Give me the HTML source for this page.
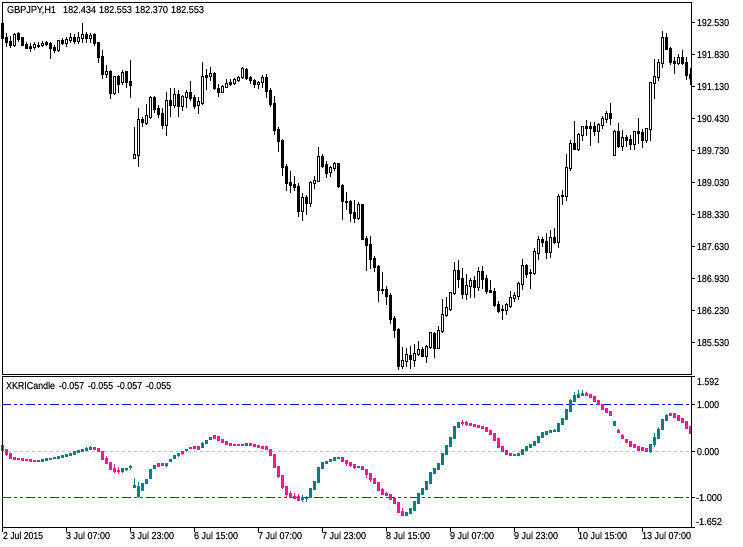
<!DOCTYPE html>
<html><head><meta charset="utf-8"><style>
html,body{margin:0;padding:0;background:#fff;width:743px;height:547px;overflow:hidden}
svg{display:block;position:absolute;left:0;top:0}
text{font-family:"Liberation Sans",sans-serif;font-size:10px;fill:#000;stroke:#000;stroke-width:.22px}
</style></head><body>
<svg id="c" width="743" height="547" viewBox="0 0 743 547" shape-rendering="crispEdges">
<g id="levels">
<line x1="2" y1="404.5" x2="691" y2="404.5" stroke="#0000ff" stroke-dasharray="9 3 3 3 3 3"/>
<line x1="2" y1="451.5" x2="691" y2="451.5" stroke="#c0c0c0" stroke-dasharray="3 3"/>
<line x1="2" y1="497.5" x2="691" y2="497.5" stroke="#800080" stroke-dasharray="9 3 3 3 3 3"/>
</g>
<g id="m"></g><g id="s"></g>
<g fill="#000">
<rect x="2" y="2" width="690" height="1"/><rect x="2" y="2" width="1" height="373"/><rect x="2" y="376" width="1" height="152"/>
<rect x="2" y="374" width="690" height="1"/><rect x="2" y="376" width="690" height="1"/><rect x="2" y="527" width="690" height="1"/>
<rect x="691" y="2" width="1" height="373"/><rect x="691" y="376" width="1" height="152"/>
<path d="M692 22h3v1h-3zM692 54h3v1h-3zM692 86h3v1h-3zM692 118h3v1h-3zM692 150h3v1h-3zM692 182h3v1h-3zM692 214h3v1h-3zM692 246h3v1h-3zM692 278h3v1h-3zM692 310h3v1h-3zM692 342h3v1h-3zM692 376h3v1h-3zM692 404h3v1h-3zM692 451h3v1h-3zM692 497h3v1h-3zM692 527h3v1h-3zM2 528h1v4h-1zM66 528h1v4h-1zM130 528h1v4h-1zM194 528h1v4h-1zM258 528h1v4h-1zM322 528h1v4h-1zM386 528h1v4h-1zM450 528h1v4h-1zM514 528h1v4h-1zM578 528h1v4h-1zM642 528h1v4h-1z"/>
</g>
<g style="text-rendering:geometricPrecision" shape-rendering="auto">
<text x="7" y="13" textLength="49" lengthAdjust="spacingAndGlyphs">GBPJPY,H1</text>
<text x="63" y="13" textLength="33" lengthAdjust="spacingAndGlyphs">182.434</text>
<text x="99" y="13" textLength="33" lengthAdjust="spacingAndGlyphs">182.553</text>
<text x="135" y="13" textLength="33" lengthAdjust="spacingAndGlyphs">182.370</text>
<text x="171" y="13" textLength="33" lengthAdjust="spacingAndGlyphs">182.553</text>
<text x="6" y="389" textLength="49" lengthAdjust="spacingAndGlyphs">XKRICandle</text>
<text x="59" y="389" textLength="25" lengthAdjust="spacingAndGlyphs">-0.057</text>
<text x="88" y="389" textLength="25" lengthAdjust="spacingAndGlyphs">-0.055</text>
<text x="117" y="389" textLength="25" lengthAdjust="spacingAndGlyphs">-0.057</text>
<text x="146" y="389" textLength="25" lengthAdjust="spacingAndGlyphs">-0.055</text>
<text x="697" y="26" textLength="32" lengthAdjust="spacingAndGlyphs">192.530</text>
<text x="697" y="58" textLength="32" lengthAdjust="spacingAndGlyphs">191.830</text>
<text x="697" y="90" textLength="32" lengthAdjust="spacingAndGlyphs">191.130</text>
<text x="697" y="122" textLength="32" lengthAdjust="spacingAndGlyphs">190.430</text>
<text x="697" y="154" textLength="32" lengthAdjust="spacingAndGlyphs">189.730</text>
<text x="697" y="186" textLength="32" lengthAdjust="spacingAndGlyphs">189.030</text>
<text x="697" y="218" textLength="32" lengthAdjust="spacingAndGlyphs">188.330</text>
<text x="697" y="250" textLength="32" lengthAdjust="spacingAndGlyphs">187.630</text>
<text x="697" y="282" textLength="32" lengthAdjust="spacingAndGlyphs">186.930</text>
<text x="697" y="314" textLength="32" lengthAdjust="spacingAndGlyphs">186.230</text>
<text x="697" y="346" textLength="32" lengthAdjust="spacingAndGlyphs">185.530</text>
<text x="697" y="385" textLength="22" lengthAdjust="spacingAndGlyphs">1.592</text>
<text x="697" y="408" textLength="22" lengthAdjust="spacingAndGlyphs">1.000</text>
<text x="697" y="455" textLength="22" lengthAdjust="spacingAndGlyphs">0.000</text>
<text x="696" y="501" textLength="26" lengthAdjust="spacingAndGlyphs">-1.000</text>
<text x="696" y="525" textLength="26" lengthAdjust="spacingAndGlyphs">-1.652</text>
<text x="3" y="539" textLength="40" lengthAdjust="spacingAndGlyphs">2 Jul 2015</text>
<text x="66" y="539" textLength="44" lengthAdjust="spacingAndGlyphs">3 Jul 07:00</text>
<text x="130" y="539" textLength="44" lengthAdjust="spacingAndGlyphs">3 Jul 23:00</text>
<text x="194" y="539" textLength="44" lengthAdjust="spacingAndGlyphs">6 Jul 15:00</text>
<text x="258" y="539" textLength="44" lengthAdjust="spacingAndGlyphs">7 Jul 07:00</text>
<text x="322" y="539" textLength="44" lengthAdjust="spacingAndGlyphs">7 Jul 23:00</text>
<text x="386" y="539" textLength="44" lengthAdjust="spacingAndGlyphs">8 Jul 15:00</text>
<text x="450" y="539" textLength="44" lengthAdjust="spacingAndGlyphs">9 Jul 07:00</text>
<text x="514" y="539" textLength="44" lengthAdjust="spacingAndGlyphs">9 Jul 23:00</text>
<text x="578" y="539" textLength="49" lengthAdjust="spacingAndGlyphs">10 Jul 15:00</text>
<text x="642" y="539" textLength="49" lengthAdjust="spacingAndGlyphs">13 Jul 07:00</text>
</g>
</svg>
<script>
var M=[[23,23,38,38,0],[33,37,42,46,0],[36,41,45,47,0],[33,34,45,46,1],[32,33,39,41,0],[37,37,45,45,0],[42,44,48,48,0],[43,46,48,51,0],[42,44,47,49,1],[42,45,46,47,0],[41,43,45,46,1],[41,42,44,45,0],[42,43,48,58,0],[45,47,50,52,0],[40,40,50,51,1],[38,40,43,44,0],[37,39,43,46,1],[33,37,40,42,1],[34,37,41,43,0],[32,37,41,43,1],[23,34,38,42,1],[32,34,38,42,0],[33,35,38,42,1],[33,34,43,45,0],[42,42,57,62,0],[50,56,74,78,0],[65,71,74,77,1],[70,71,93,98,0],[76,76,93,94,1],[75,76,84,92,0],[70,72,82,84,1],[71,71,82,87,0],[60,81,85,97,0],[127,154,158,158,1],[108,119,155,166,1],[117,119,122,126,0],[104,115,123,124,1],[96,97,117,118,1],[96,97,109,112,0],[105,108,114,117,0],[108,113,125,128,0],[92,100,125,135,1],[88,100,105,116,0],[88,94,105,107,1],[90,94,106,116,0],[95,96,106,110,1],[90,92,97,107,1],[81,92,98,100,0],[95,97,106,108,0],[97,101,105,113,1],[62,76,103,104,1],[69,75,77,89,0],[67,73,76,80,1],[72,73,88,89,0],[84,88,92,96,0],[85,86,92,92,1],[79,83,87,87,1],[79,82,84,85,0],[78,79,83,84,1],[76,77,80,81,1],[67,68,77,78,1],[68,69,78,79,0],[76,77,80,83,0],[79,80,84,87,0],[81,82,84,88,1],[75,77,82,87,1],[74,77,91,97,0],[88,90,104,106,0],[96,103,130,134,0],[127,129,141,151,0],[139,140,167,175,0],[164,166,183,190,0],[171,182,185,192,0],[176,184,187,190,0],[183,186,211,216,0],[193,197,211,220,1],[195,197,203,214,0],[181,182,203,206,1],[176,180,183,188,1],[147,156,181,181,1],[154,156,166,167,0],[161,164,173,177,0],[166,167,172,176,1],[162,163,168,170,1],[163,163,186,187,0],[184,185,201,219,0],[192,201,202,209,0],[200,201,213,221,0],[200,212,218,222,0],[202,204,218,219,1],[204,204,239,239,0],[236,238,245,270,0],[236,244,259,268,0],[256,258,267,271,0],[265,266,290,301,0],[272,289,290,293,0],[286,289,296,304,0],[293,295,319,323,0],[316,318,330,337,0],[328,329,366,369,0],[347,360,366,368,1],[348,354,361,366,1],[346,355,359,368,0],[344,353,360,366,1],[341,349,354,355,1],[347,349,356,356,0],[345,346,356,362,1],[332,332,347,348,1],[332,333,348,357,0],[326,330,348,348,1],[299,314,331,332,1],[297,307,315,316,1],[292,292,309,310,1],[262,270,293,294,1],[260,270,279,287,0],[268,278,294,298,0],[274,285,294,299,1],[278,280,286,297,1],[276,280,287,297,0],[267,271,287,290,1],[266,271,279,288,0],[275,278,291,293,0],[280,290,292,292,0],[288,291,305,306,0],[301,304,311,312,0],[305,309,310,319,0],[303,304,310,314,1],[291,297,306,307,1],[292,295,298,301,1],[282,283,296,299,1],[259,265,284,289,1],[264,265,274,277,0],[269,272,273,288,0],[248,251,273,274,1],[236,239,253,259,1],[237,239,242,246,0],[233,241,252,258,0],[230,237,252,257,1],[228,237,242,243,0],[194,196,242,247,1],[190,195,196,204,0],[154,167,196,200,1],[140,143,168,170,1],[121,143,149,149,0],[133,134,149,150,1],[126,126,135,140,1],[120,126,128,135,0],[122,126,128,145,0],[122,126,131,135,0],[123,124,131,142,1],[116,118,125,128,1],[111,113,119,122,1],[103,113,118,124,0],[130,131,155,155,1],[123,131,146,147,0],[130,137,146,150,1],[135,137,140,146,0],[135,139,144,149,0],[131,131,144,149,1],[118,131,133,143,0],[129,132,140,147,0],[128,128,140,142,1],[82,82,129,140,1],[59,76,83,98,1],[59,62,77,80,1],[31,37,63,67,1],[33,37,49,49,0],[47,48,62,64,0],[57,61,63,73,0],[54,57,63,64,1],[50,57,63,64,0],[57,62,75,79,0],[68,74,78,84,0]];
var P=1,T=0;
var S=[[445,445,450,450,P],[449,449,454,455,P],[453,453,458,458,P],[457,457,459,459,P],[458,458,459,459,P],[458,458,460,460,P],[459,459,460,460,P],[459,459,461,461,P],[460,460,461,461,P],[460,460,461,461,T],[459,459,461,461,T],[458,458,460,460,T],[458,458,459,459,T],[457,457,458,458,T],[456,456,458,458,T],[455,455,457,457,T],[454,454,456,456,T],[453,453,455,455,T],[451,451,454,454,T],[450,450,452,452,T],[449,449,451,451,T],[447,448,450,450,T],[446,447,449,449,T],[447,447,449,449,P],[448,448,451,451,P],[451,451,459,459,P],[456,458,463,463,P],[462,462,469,469,P],[464,468,471,472,P],[467,470,471,473,P],[468,468,471,472,T],[468,468,469,470,T],[465,466,467,469,T],[478,485,487,487,T],[482,486,496,497,T],[483,483,490,490,T],[479,479,483,483,T],[469,469,478,478,T],[465,465,468,468,T],[463,463,466,466,P],[463,463,465,465,P],[463,463,465,466,T],[459,459,461,461,T],[455,455,458,458,T],[453,453,455,456,T],[451,451,453,454,P],[449,449,450,451,T],[447,447,448,448,P],[446,446,448,448,P],[446,446,449,449,P],[442,443,447,447,T],[440,440,443,443,T],[437,437,439,439,T],[435,435,438,438,P],[436,436,440,440,P],[439,439,442,442,P],[441,441,444,444,P],[443,443,445,445,P],[444,444,445,445,P],[444,444,445,445,P],[444,444,445,445,T],[443,443,445,445,T],[443,443,445,445,P],[444,444,446,446,P],[445,445,447,447,P],[446,446,448,448,P],[446,446,449,449,P],[449,449,455,455,P],[454,454,467,467,P],[466,466,476,477,P],[475,475,487,488,P],[486,486,494,496,P],[491,493,497,497,P],[493,496,498,498,P],[494,496,500,500,P],[495,497,499,501,T],[496,497,498,501,T],[488,488,497,497,T],[481,481,489,489,T],[467,467,482,482,T],[462,462,468,468,T],[461,461,463,463,T],[459,459,461,461,T],[457,457,460,460,T],[457,457,458,458,T],[457,457,461,461,P],[460,460,463,465,P],[462,462,465,466,P],[464,464,467,468,P],[466,466,467,467,T],[466,466,469,469,P],[469,469,474,477,P],[473,473,479,481,P],[478,478,483,483,P],[482,482,490,490,P],[488,489,494,494,P],[492,493,495,495,P],[494,494,499,499,P],[498,498,503,503,P],[502,502,512,512,P],[508,511,515,515,P],[512,512,515,515,T],[508,508,513,513,T],[501,501,510,510,T],[493,493,503,503,T],[488,488,494,494,T],[481,481,489,489,T],[472,472,483,483,T],[468,468,473,473,T],[463,463,469,469,T],[453,453,464,464,T],[445,445,454,454,T],[437,437,446,446,T],[426,426,438,438,T],[422,422,427,427,T],[420,422,423,425,P],[421,422,424,425,P],[423,423,425,425,P],[424,424,426,426,P],[425,425,427,427,P],[426,426,428,428,P],[427,427,431,431,P],[430,430,434,434,P],[433,433,440,440,P],[438,438,447,447,P],[446,446,451,451,P],[450,450,454,454,P],[453,453,455,455,P],[454,454,455,455,T],[453,453,455,455,T],[449,449,454,454,T],[446,446,450,450,T],[444,444,447,447,T],[441,441,445,445,T],[436,436,442,442,T],[432,432,437,437,T],[431,431,434,434,T],[430,430,432,432,T],[429,430,431,431,T],[423,423,431,431,T],[418,418,424,424,T],[409,409,419,419,T],[399,400,411,411,T],[392,395,401,401,T],[390,394,397,397,T],[390,393,395,395,T],[392,393,395,395,P],[394,394,397,397,P],[396,396,401,401,P],[400,400,404,404,P],[404,404,409,409,P],[408,408,412,412,P],[411,411,415,415,P],[421,421,425,425,T],[429,430,432,432,P],[434,435,438,438,P],[439,439,442,442,P],[441,441,446,446,P],[444,444,447,447,P],[446,446,450,450,P],[447,447,450,450,P],[448,448,451,451,P],[444,444,451,452,T],[433,437,444,446,T],[427,429,438,438,T],[419,419,429,429,T],[414,415,420,420,T],[413,413,415,415,P],[413,413,417,417,P],[415,415,420,420,P],[418,418,422,422,P],[421,421,428,428,P],[426,426,433,433,P]];
function r(x,y,w,h,f){return '<rect x="'+x+'" y="'+y+'" width="'+w+'" height="'+h+'" fill="'+f+'"/>';}
var a='',i,d,x;
for(i=0;i<M.length;i++){d=M[i];x=2+4*i;
 a+=r(x,d[0],1,d[3]-d[0]+1,'#000');
 a+=r(x-1,d[1],3,d[2]-d[1]+1,'#000');
 if(d[4]&&d[2]-d[1]>1)a+=r(x,d[1]+1,1,d[2]-d[1]-1,'#fff');
}
document.getElementById('m').innerHTML=a;
a='';
for(i=0;i<S.length;i++){d=S[i];x=2+4*i;var c=d[4]?'#ff1493':'#008080';
 a+=r(x,d[0],1,d[3]-d[0]+1,c);
 a+=r(x-1,d[1],3,d[2]-d[1]+1,c);
}
document.getElementById('s').innerHTML=a;
</script>
</body></html>
